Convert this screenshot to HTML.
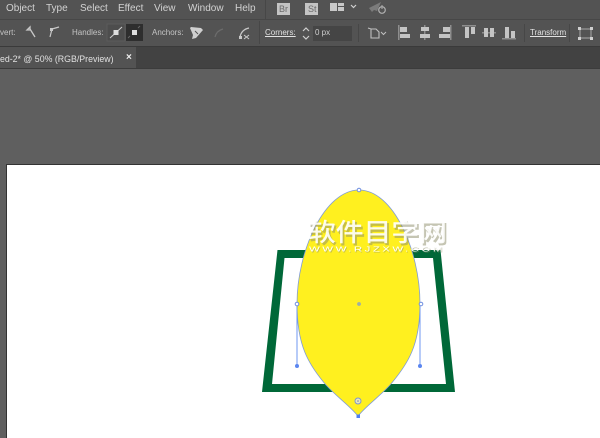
<!DOCTYPE html>
<html>
<head>
<meta charset="utf-8">
<style>
html,body{margin:0;padding:0;background:#5f5f5f}
#p{position:relative;width:600px;height:438px;overflow:hidden;background:#5f5f5f;font-family:"Liberation Sans",sans-serif;color:#d0d0d0}
.b{position:absolute;left:0;width:600px}
.t{position:absolute;white-space:nowrap;line-height:12px;color:#cfcfcf;filter:blur(0.25px)}
.m{font-size:10px;top:2.5px;color:#d2d2d2}
.s{font-size:8px;top:27px;color:#c4c4c4}
svg{position:absolute;left:0;top:0}
</style>
</head>
<body>
<div id="p">
<div class="b" style="top:0;height:19px;background:#535353"></div>
<div class="b" style="top:19px;height:27px;background:#535353;border-top:1px solid #474747;box-sizing:border-box"></div>
<div class="b" style="top:46px;height:23px;background:#424242;border-top:1px solid #3a3a3a;border-bottom:1px solid #3c3c3c;box-sizing:border-box"></div>
<div style="position:absolute;left:0;top:47px;width:136px;height:21px;background:#535353"></div>
<div style="position:absolute;left:6px;top:164px;width:594px;height:274px;background:#fff;border-left:1px solid #333;border-top:1px solid #333;box-sizing:border-box"></div>

<svg width="600" height="438" viewBox="0 0 600 438" fill="none">
<rect x="265" y="0" width="1" height="19" fill="#474747"/>
<rect x="277" y="3" width="13" height="12" fill="#c4c4c4"/>
<rect x="305" y="3" width="13" height="12" fill="#c4c4c4"/>
<rect x="330" y="3" width="7" height="8" fill="#c8c8c8"/><rect x="338" y="3" width="6" height="3" fill="#c8c8c8"/><rect x="338" y="7" width="6" height="4" fill="#c8c8c8"/>
<path d="M351 5l2.500 2.500L356 5" stroke="#d0d0d0" stroke-width="1.200"/>
<path d="M369 8l12-6-4 9-3-1-2 2z" fill="#7b7b7b"/>
<circle cx="382" cy="10" r="3.300" stroke="#b0b0b0" stroke-width="1.200"/><path d="M382 5v4" stroke="#b0b0b0"/>

<path d="M27 30l3 0 0 -3zM30 29l5 8" stroke="#c8c8c8" stroke-width="1.300"/>
<path d="M50 37l2-8 7-2" stroke="#c8c8c8" stroke-width="1.200"/><rect x="50" y="28" width="3" height="3" fill="#c8c8c8"/>
<rect x="107" y="24" width="18" height="17" fill="#4d4d4d" stroke="#5b5b5b"/>
<path d="M110 38l12-11" stroke="#d0d0d0"/><rect x="113.500" y="30" width="5" height="5" fill="#ddd"/>
<rect x="126" y="24" width="17" height="17" fill="#2e2e2e"/>
<rect x="132" y="30" width="5" height="5" fill="#ddd"/><path d="M128 38l2-2M138 28l2-2" stroke="#666"/>
<path d="M191 27l10 1 2 2-7 8-4 1 1-4-3-7z" fill="#cfcfcf"/><path d="M195 31l3 3" stroke="#535353"/>
<path d="M215 37c1-4 4-7 8-8" stroke="#6c6c6c" stroke-width="1.200"/>
<path d="M240 37c1-5 4-8 9-9" stroke="#c8c8c8" stroke-width="1.200"/><rect x="239" y="36" width="3" height="3" fill="#c8c8c8"/><path d="M244 35l5 4M249 35l-5 4" stroke="#c8c8c8"/>
<rect x="259" y="21" width="1" height="23" fill="#474747"/>
<path d="M303 31l3-3 3 3M303 36l3 3 3-3" stroke="#d0d0d0" stroke-width="1.200"/>
<rect x="313" y="26" width="39" height="15" fill="#454545"/>
<rect x="358" y="24" width="1" height="18" fill="#474747"/>
<path d="M371 29h5l3 3v6h-8zM368 28l3 1" stroke="#c0c0c0" stroke-width="1.100"/><path d="M381 32l2.500 2.500L386 32" stroke="#c0c0c0"/>
<g fill="#c4c4c4">
<rect x="398" y="25" width="1.500" height="15" fill="#8e8e8e"/><rect x="400" y="27" width="7" height="5"/><rect x="400" y="34" width="10" height="4"/>
<rect x="424" y="25" width="1.500" height="15" fill="#8e8e8e"/><rect x="421" y="27" width="8" height="4"/><rect x="420" y="34" width="10" height="4"/>
<rect x="450" y="25" width="1.500" height="15" fill="#8e8e8e"/><rect x="443" y="27" width="7" height="5"/><rect x="439" y="34" width="11" height="4"/>
<rect x="462" y="25" width="14" height="1.500" fill="#8e8e8e"/><rect x="465" y="27" width="4" height="11"/><rect x="471" y="27" width="4" height="7"/>
<rect x="482" y="32" width="14" height="1.500" fill="#8e8e8e"/><rect x="484" y="28" width="4" height="9"/><rect x="490" y="28" width="4" height="9"/>
<rect x="502" y="38" width="14" height="1.500" fill="#8e8e8e"/><rect x="505" y="27" width="4" height="11"/><rect x="511" y="31" width="4" height="7"/>
</g>
<rect x="524" y="24" width="1" height="18" fill="#474747"/>
<rect x="569" y="24" width="1" height="18" fill="#474747"/>
<path d="M580 29h11v9h-11z" stroke="#a8a8a8" stroke-width="1"/>
<g fill="#cfcfcf"><rect x="578" y="27" width="3" height="3"/><rect x="590" y="27" width="3" height="3"/><rect x="578" y="37" width="3" height="3"/><rect x="590" y="37" width="3" height="3"/></g>

<path fill-rule="evenodd" d="M277.500 250H440.500L455 392H262ZM284.500 258L272 384H446L433 258Z" fill="#006838"/>
<path d="M359 190C393 190 420 250 420 304C420 345 408 364 390 385C378 398 367 405 358 416C349 405 338 398 326 385C308 364 297 345 297 304C297 250 325 190 359 190Z" fill="#fff01f" stroke="#7f9bd8" stroke-width="0.800"/>
<path d="M297 304V366M420 304V366" stroke="#6f97f0"/>
<circle cx="297" cy="366" r="2" fill="#5b86f0"/><circle cx="420" cy="366" r="2" fill="#5b86f0"/>
<circle cx="297" cy="304" r="1.800" fill="#fff" stroke="#6f8fe0"/>
<circle cx="421" cy="304" r="1.800" fill="#fff" stroke="#6f8fe0"/>
<circle cx="359" cy="190" r="1.800" fill="#fff" stroke="#6f8fe0"/>
<rect x="357.500" y="302.500" width="3" height="3" rx="1" fill="#9fb0a0" stroke="#7f9bd8" stroke-width="0.500"/>
<circle cx="358" cy="401" r="3" fill="#e8e8c0" stroke="#7f95d0"/><circle cx="358" cy="401" r="0.800" fill="#6f80b0"/>
<rect x="356.500" y="414.500" width="3.500" height="3.500" fill="#4f7ff0"/>

<text x="308" y="241" textLength="139" lengthAdjust="spacingAndGlyphs" font-family="'Liberation Sans','Noto Sans CJK SC',sans-serif" font-size="25" font-weight="700" fill="#8d8d6a" opacity="0.5" transform="translate(1.500,2)">软件目字网</text>
<text x="308" y="241" textLength="139" lengthAdjust="spacingAndGlyphs" font-family="'Liberation Sans','Noto Sans CJK SC',sans-serif" font-size="25" font-weight="500" fill="#fff" fill-opacity="0.9">软件目字网</text>
<text font-family="'Liberation Sans',sans-serif" font-size="7" letter-spacing="1.500" fill="#8d8d6a" opacity="0.5" transform="translate(309.800,252.300) scale(1.640,1)">WWW.RJZXW.COM</text>
<text font-family="'Liberation Sans',sans-serif" font-size="7" letter-spacing="1.500" fill="#fff" transform="translate(309,251.500) scale(1.640,1)">WWW.RJZXW.COM</text>
</svg>

<span class="t m" style="left:6px">Object</span>
<span class="t m" style="left:46px">Type</span>
<span class="t m" style="left:80px">Select</span>
<span class="t m" style="left:118px">Effect</span>
<span class="t m" style="left:154px">View</span>
<span class="t m" style="left:188px">Window</span>
<span class="t m" style="left:235px">Help</span>
<span class="t" style="left:279px;top:3px;font-size:9px;color:#6a6a6a">Br</span>
<span class="t" style="left:308px;top:3px;font-size:9px;color:#6a6a6a">St</span>
<span class="t s" style="left:0">vert:</span>
<span class="t s" style="left:72px">Handles:</span>
<span class="t s" style="left:152px">Anchors:</span>
<span class="t s" style="left:265px;color:#e2e2e2;text-decoration:underline">Corners:</span>
<span class="t s" style="left:315px;color:#cfcfcf">0 px</span>
<span class="t s" style="left:530px;color:#e2e2e2;text-decoration:underline">Transform</span>
<span class="t" style="left:-2px;top:52.500px;font-size:8.800px;color:#e0e0e0">led-2* @ 50% (RGB/Preview)</span>
<span class="t" style="left:126px;top:51.500px;font-size:10px;color:#eee;font-weight:bold">×</span>
</div>
</body>
</html>
